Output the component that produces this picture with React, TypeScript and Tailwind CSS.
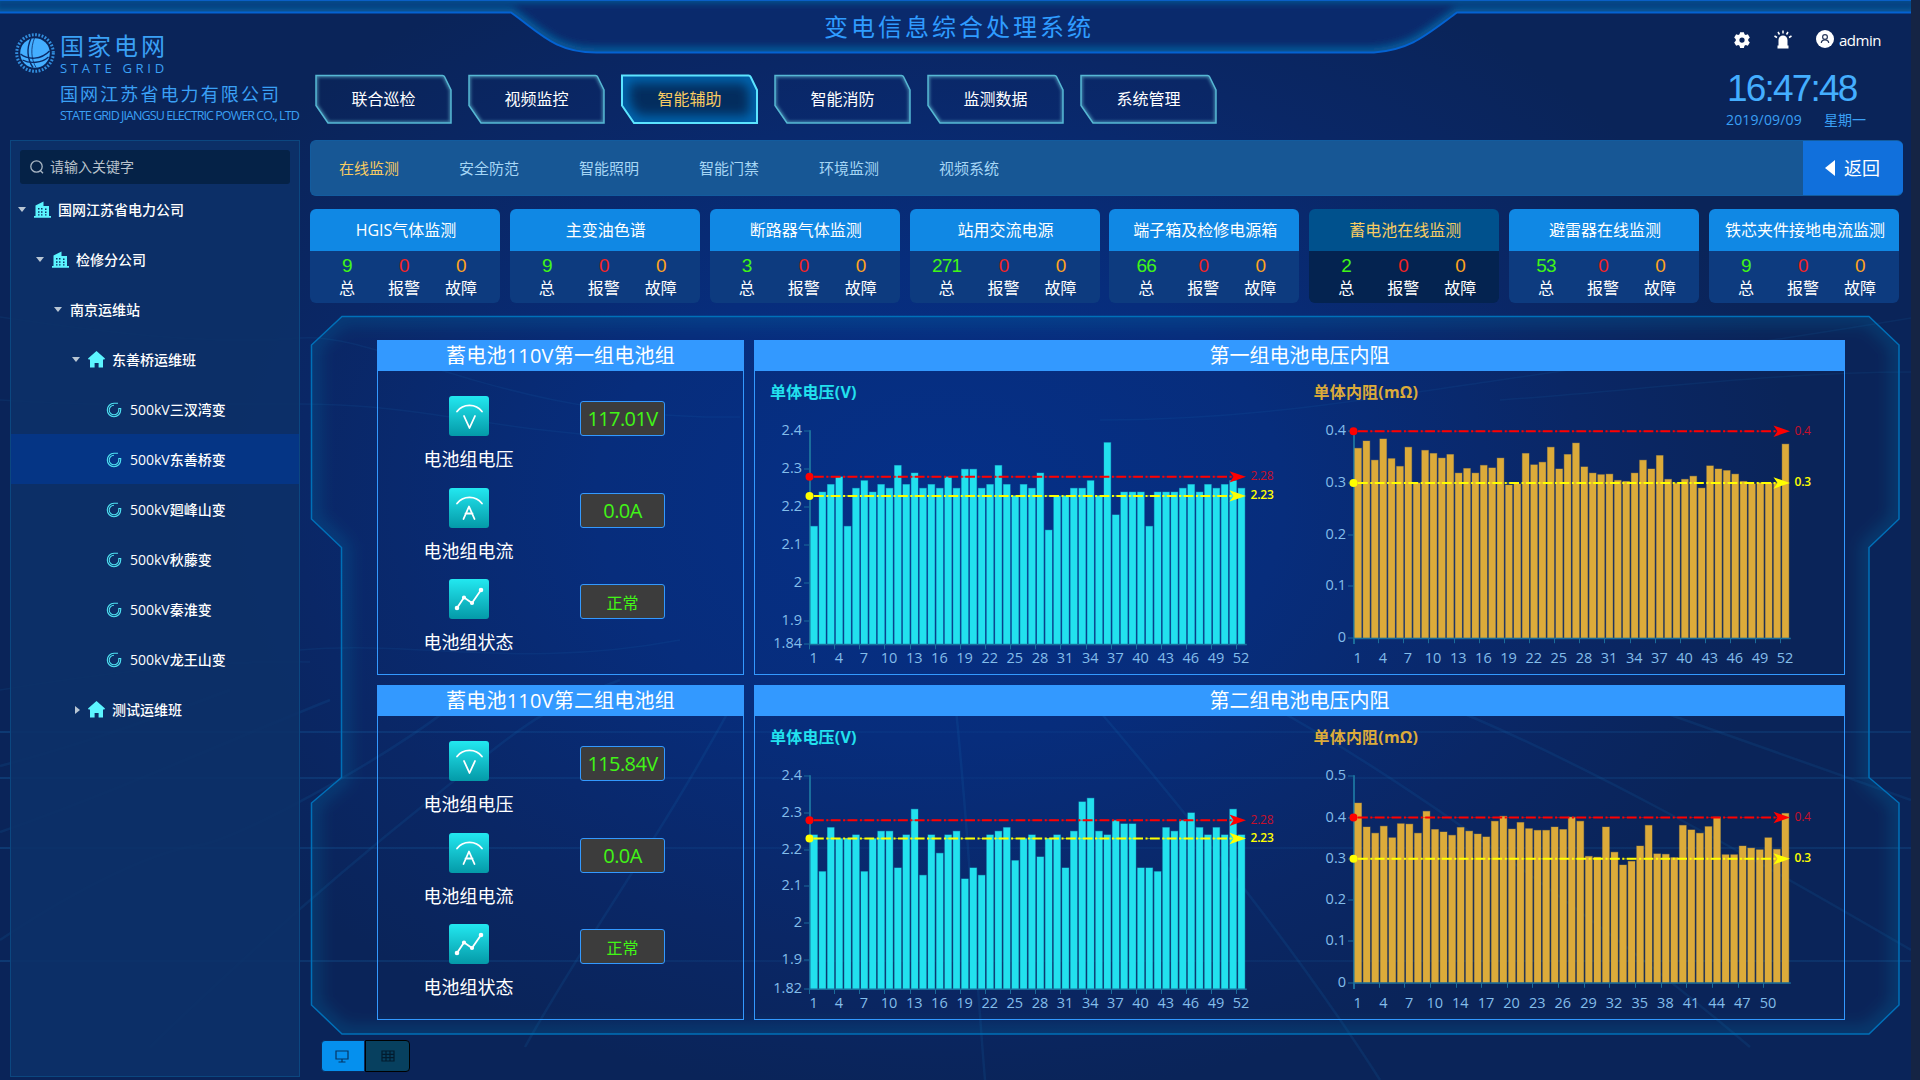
import React from "react";

const NAV = ["联合巡检", "视频监控", "智能辅助", "智能消防", "监测数据", "系统管理"];
const SUBNAV = ["在线监测", "安全防范", "智能照明", "智能门禁", "环境监测", "视频系统"];

const CARDS = [
  { title: "HGIS气体监测", total: 9 },
  { title: "主变油色谱", total: 9 },
  { title: "断路器气体监测", total: 3 },
  { title: "站用交流电源", total: 271 },
  { title: "端子箱及检修电源箱", total: 66 },
  { title: "蓄电池在线监测", total: 2, active: true },
  { title: "避雷器在线监测", total: 53 },
  { title: "铁芯夹件接地电流监测", total: 9 },
];

type TreeIcon = "building" | "home" | "ring" | "none";
const TREE: { level: number; label: string; icon: TreeIcon; arrow?: "open" | "closed"; active?: boolean }[] = [
  { level: 0, label: "国网江苏省电力公司", icon: "building", arrow: "open" },
  { level: 1, label: "检修分公司", icon: "building", arrow: "open" },
  { level: 2, label: "南京运维站", icon: "none", arrow: "open" },
  { level: 3, label: "东善桥运维班", icon: "home", arrow: "open" },
  { level: 4, label: "500kV三汊湾变", icon: "ring" },
  { level: 4, label: "500kV东善桥变", icon: "ring", active: true },
  { level: 4, label: "500kV廻峰山变", icon: "ring" },
  { level: 4, label: "500kV秋藤变", icon: "ring" },
  { level: 4, label: "500kV秦淮变", icon: "ring" },
  { level: 4, label: "500kV龙王山变", icon: "ring" },
  { level: 3, label: "测试运维班", icon: "home", arrow: "closed" },
];

const V1 = [
  2.15, 2.24, 2.26, 2.28, 2.15, 2.25, 2.27, 2.24, 2.26, 2.25, 2.31, 2.26, 2.29, 2.25, 2.26, 2.25, 2.28, 2.25, 2.3, 2.3,
  2.25, 2.26, 2.31, 2.26, 2.23, 2.26, 2.25, 2.29, 2.14, 2.23, 2.23, 2.25, 2.25, 2.27, 2.23, 2.37, 2.18, 2.24, 2.24, 2.24,
  2.15, 2.24, 2.24, 2.24, 2.25, 2.26, 2.24, 2.26, 2.25, 2.26, 2.27, 2.25,
];
const R1 = [
  0.367, 0.381, 0.344, 0.385, 0.347, 0.332, 0.369, 0.3, 0.363, 0.357, 0.348, 0.355, 0.319, 0.328, 0.319, 0.334, 0.329,
  0.348, 0.296, 0.298, 0.357, 0.335, 0.34, 0.369, 0.327, 0.355, 0.377, 0.331, 0.319, 0.316, 0.317, 0.305, 0.303, 0.319,
  0.344, 0.327, 0.353, 0.307, 0.299, 0.307, 0.313, 0.29, 0.333, 0.327, 0.324, 0.317, 0.303, 0.298, 0.3, 0.3, 0.299, 0.375,
];
const V2 = [
  2.24, 2.14, 2.26, 2.23, 2.23, 2.24, 2.14, 2.23, 2.25, 2.25, 2.15, 2.24, 2.31, 2.13, 2.24, 2.19, 2.24, 2.25, 2.12, 2.15,
  2.13, 2.24, 2.25, 2.26, 2.17, 2.23, 2.24, 2.18, 2.23, 2.24, 2.15, 2.25, 2.33, 2.34, 2.25, 2.24, 2.28, 2.27, 2.27, 2.15,
  2.15, 2.14, 2.26, 2.25, 2.28, 2.3, 2.26, 2.24, 2.26, 2.24, 2.31, 2.24,
];
const R2 = [
  0.435, 0.377, 0.362, 0.379, 0.351, 0.385, 0.384, 0.362, 0.415, 0.371, 0.365, 0.357, 0.376, 0.367, 0.36, 0.353, 0.391,
  0.403, 0.372, 0.388, 0.373, 0.369, 0.369, 0.377, 0.371, 0.401, 0.391, 0.306, 0.304, 0.377, 0.316, 0.285, 0.294, 0.331,
  0.381, 0.312, 0.311, 0.303, 0.381, 0.37, 0.362, 0.378, 0.401, 0.31, 0.31, 0.331, 0.326, 0.322, 0.351, 0.323, 0.41,
];

const cells = Array.from({ length: 52 }, (_, i) => i + 1);
const cellsWithout13 = cells.filter((n) => n !== 13);

interface ChartProps {
  title: string;
  color: string;
  width: number;
  x0: number;
  titleX: number;
  baseY: number;
  axisBottom: number;
  min: number;
  max: number;
  ticks: number[];
  values: number[];
  names: number[];
  red: number;
  yellow: number;
}

function BarChart(p: ChartProps) {
  const top = 60.2;
  const plotW = 435.8;
  const step = plotW / p.values.length;
  const y = (v: number) => p.baseY - ((v - p.min) / (p.max - p.min)) * (p.baseY - top);
  const axis = "#1a6d9b";
  const marks = [
    { v: p.red, c: "#ff0000", t: "#c80f2a" },
    { v: p.yellow, c: "#ffff00", t: "#ffff00" },
  ];
  return (
    <svg width={p.width} height={303} className="block shrink-0">
      <text x={p.titleX} y={27} fontSize={16} fontWeight={700} fill={p.color} letterSpacing={0.2}>
        {p.title}
      </text>
      <rect x={p.x0 - 1} y={top - 1} width={2} height={p.axisBottom - top + 1} fill={axis} />
      {p.ticks.map((t) => (
        <g key={t}>
          <rect x={p.x0 - 6} y={Math.round(y(t)) - 0.5} width={6} height={1} fill={axis} />
          <text x={p.x0 - 8} y={y(t) + 4} fontSize={14.5} fill="#83bdea" textAnchor="end">
            {t}
          </text>
        </g>
      ))}
      {p.values.map((v, i) => (
        <rect
          key={i}
          x={p.x0 + i * step + 0.7}
          y={y(v)}
          width={step * 0.8}
          height={p.baseY - y(v)}
          fill={p.color}
          stroke={p.color}
          strokeOpacity={0.35}
          strokeWidth={1}
        />
      ))}
      <rect x={p.x0 - 1} y={p.baseY - 0.5} width={plotW + 2} height={1.5} fill={axis} />
      {p.names.map((n, i) =>
        i % 3 === 0 ? (
          <g key={n}>
            <rect x={Math.round(p.x0 + i * step) - 1} y={p.baseY} width={1} height={5} fill={axis} />
            <text x={p.x0 + (i + 0.5) * step - 0.5} y={292} fontSize={14.5} fill="#83bdea" textAnchor="middle">
              {n}
            </text>
          </g>
        ) : null
      )}
      {marks.map((m) => (
        <g key={m.c} transform={`translate(${p.x0} ${y(m.v)})`}>
          <line x1={0} x2={426} y1={0} y2={0} stroke={m.c} strokeWidth={1} strokeOpacity={0.45} strokeDasharray="10.800 6" />
          <line x1={4} x2={426} y1={0} y2={0} stroke={m.c} strokeWidth={2} strokeDasharray="9.800 2.500 2 2.500" />
          <circle cx={-0.5} cy={0} r={4} fill={m.c} />
          <path d="M436 0 L419.5 -5.7 L423.5 0 L419.5 5.7 Z" fill={m.c} />
          <text x={440.500} y={3.5} fontSize={12} fill={m.t} fontWeight={m.c === "#ffff00" ? 600 : 400} letterSpacing={-0.2}>
            {m.v}
          </text>
        </g>
      ))}
    </svg>
  );
}

function MeterIcon({ kind }: { kind: "V" | "A" | "line" }) {
  return (
    <div className="flex h-10 w-10 items-center justify-center rounded-[3px] bg-linear-to-b from-[#22e8f0] to-[#049aa8]">
      <svg width="40" height="40" viewBox="0 0 40 40" fill="none" stroke="#fff" strokeWidth="1.8" strokeLinecap="round" strokeLinejoin="round">
        {kind !== "line" && <path d="M8 15.5C14 7.300 27 7.300 33 15.500" />}
        {kind === "V" && <path d="M15 20L20.500 32L26 20" />}
        {kind === "A" && <path d="M14.500 31L20 18.500L25.500 31M16.500 25.500H23.500" />}
        {kind === "line" && (
          <>
            <path d="M8 29L15 18.500L23 24L32 11" />
            <circle cx="8" cy="29" r="1.400" fill="#fff" />
            <circle cx="15" cy="18.500" r="1.200" fill="#fff" />
            <circle cx="23" cy="24" r="1.200" fill="#fff" />
            <circle cx="32" cy="11" r="1.400" fill="#fff" />
          </>
        )}
      </svg>
    </div>
  );
}

function GroupPanel({ title, voltage }: { title: string; voltage: string }) {
  const rows = [
    { kind: "V" as const, label: "电池组电压", value: voltage, cls: "text-[20px] tracking-[-0.600px] pt-px" },
    { kind: "A" as const, label: "电池组电流", value: "0.0A", cls: "text-[20px] tracking-[-0.600px] pt-px" },
    { kind: "line" as const, label: "电池组状态", value: "正常", cls: "text-base pt-[3px]" },
  ];
  return (
    <section className="h-[335px] w-[367px] shrink-0 border border-[#3399ff]">
      <h2 className="flex h-[30px] items-center justify-center bg-[#3399ff] text-xl leading-none tracking-[0.200px] text-white">{title}</h2>
      <div className="flex flex-col gap-[5px] pt-[25px]">
        {rows.map((r) => (
          <div key={r.label} className="flex h-[86.5px] pl-[31px]">
            <div className="flex w-[120px] flex-col items-center">
              <MeterIcon kind={r.kind} />
              <span className="mt-[13px] -ml-px text-lg leading-5 text-white">{r.label}</span>
            </div>
            <div
              className={`ml-[51px] mt-[5px] flex h-[35px] w-[85px] items-center justify-center rounded-[3px] border border-[#3399ff] bg-[#3c3c3c] leading-none text-[#41f516] ${r.cls}`}
            >
              {r.value}
            </div>
          </div>
        ))}
      </div>
    </section>
  );
}

function ChartPanel({ title, children }: { title: string; children: React.ReactNode }) {
  return (
    <section className="h-[335px] w-[1091px] shrink-0 border border-[#3399ff]">
      <h2 className="flex h-[30px] items-center justify-center bg-[#3399ff] text-xl leading-none text-white">{title}</h2>
      <div className="flex">{children}</div>
    </section>
  );
}

function Background() {
  const h = [731, 777, 847, 960];
  return (
    <svg width="1911" height="1080" className="absolute left-0 top-0" fill="none">
      <defs>
        <radialGradient id="bgGlow" gradientUnits="userSpaceOnUse" cx="0" cy="0" r="1" gradientTransform="translate(940 500) scale(860 600)">
          <stop offset="0" stopColor="#053088" />
          <stop offset="0.4" stopColor="#072d7c" />
          <stop offset="0.75" stopColor="#0a2766" />
          <stop offset="1" stopColor="#0a2459" />
        </radialGradient>
        <linearGradient id="hLine" x1="0" x2="1">
          <stop offset="0" stopColor="#1a7ac0" stopOpacity="0.250" />
          <stop offset="0.500" stopColor="#1a7ac0" stopOpacity="0.060" />
          <stop offset="1" stopColor="#1a7ac0" stopOpacity="0.180" />
        </linearGradient>
      </defs>
      <rect width="1911" height="1080" fill="url(#bgGlow)" />
      {h.map((yy) => (
        <rect key={yy} x="0" y={yy} width="1911" height="2" fill="url(#hLine)" />
      ))}
      <g stroke="#1a7fc4" strokeOpacity="0.130" strokeWidth="2.500">
        <path d="M150 1047C240 960 330 880 430 800S540 710 620 680" />
        <path d="M525 1047C590 930 660 840 740 690" />
        <path d="M985 1080C975 960 968 820 955 700" />
        <path d="M1380 1080C1310 970 1210 840 1090 700" />
        <path d="M1750 1047C1600 920 1380 760 1240 690" />
        <path d="M0 940C90 880 160 850 200 845S420 740 470 690" />
        <path d="M0 832C120 790 230 740 330 700" />
        <path d="M0 766C80 745 150 720 230 690" />
        <path d="M1911 950C1740 850 1560 750 1430 700" />
        <path d="M1911 800C1800 760 1700 725 1600 690" />
      </g>
      <g stroke="#1a7fc4" strokeOpacity="0.100" strokeWidth="1.500">
        <path d="M0 317C120 335 220 345 300 338S500 420 740 417" />
        <path d="M0 400C160 410 240 400 340 405S500 430 620 437" />
        <path d="M300 650C420 640 520 670 680 640" />
        <path d="M1911 318C1780 340 1640 360 1500 380S1250 420 1100 420" />
        <path d="M1911 372C1780 372 1640 390 1500 400" />
        <path d="M0 690C120 670 220 660 310 662" />
      </g>
    </svg>
  );
}

function HeaderFrame() {
  const shape = "M-10 12.500H511C540 33 555 52.500 596 52.500H1374C1410 50 1425 36 1457 12.500H1921V-3H-10Z";
  return (
    <svg width="1911" height="60" className="absolute left-0 top-0">
      <defs>
        <clipPath id="hdClip">
          <path d={shape} />
        </clipPath>
        <filter id="hdBlur" x="-5%" y="-60%" width="110%" height="220%">
          <feGaussianBlur stdDeviation="4" />
        </filter>
      </defs>
      <path d={shape} fill="#0a2a6c" />
      <g clipPath="url(#hdClip)">
        <path d={shape} fill="none" stroke="#0c5c98" strokeWidth="8" filter="url(#hdBlur)" />
        <path d={shape} fill="none" stroke="#0d63a4" strokeWidth="4" filter="url(#hdBlur)" />
      </g>
      <path d={shape} fill="none" stroke="#0462d2" strokeWidth="2" />
      <rect width="1911" height="1" fill="#0a5fc6" />
    </svg>
  );
}

function StateGridLogo() {
  return (
    <svg width="42" height="42" viewBox="0 0 42 42" fill="none">
      <circle cx="21" cy="21" r="18.300" stroke="#3aa0f5" strokeOpacity="0.850" strokeWidth="3" strokeDasharray="1.800 1.500" />
      <circle cx="21" cy="21" r="14.800" fill="#44aeff" />
      <g stroke="#0a2a68" strokeWidth="1.400">
        <path d="M17 6.500C12.500 16 13 27 19 35.500" />
        <path d="M20.500 6C16.500 16 17 27 22 35.500" strokeWidth="0.800" />
        <path d="M6.500 22C14 28 27 28 35.500 19" />
        <path d="M8.500 28C16 32 28 31 34.500 25" />
      </g>
    </svg>
  );
}

function NavButton({ label, active }: { label: string; active: boolean }) {
  const d = "M1.500 1.500H127.500Q129 1.500 129.700 3L136 16V49H13L1 31.500V1.500Z";
  const id = active ? "navOn" : "navOff";
  return (
    <button className="relative flex h-[50px] w-[137px] items-center justify-center">
      <svg width="137" height="50" className="absolute left-0 top-0">
        <defs>
          <clipPath id={id}>
            <path d={d} />
          </clipPath>
          <filter id={id + "Blur"}>
            <feGaussianBlur stdDeviation={active ? 6 : 1.5} />
          </filter>
        </defs>
        {active && <path d={d} fill="#032d5e" />}
        <g clipPath={`url(#${id})`}>
          <path
            d={d}
            fill="none"
            stroke={active ? "#0468b4" : "#5fb4cf"}
            strokeOpacity={active ? 1 : 0.6}
            strokeWidth={active ? 14 : 4}
            filter={`url(#${id}Blur)`}
          />
        </g>
        <path d={d} fill="none" stroke={active ? "#5ce4ff" : "#56b8d4"} strokeWidth={active ? 2 : 1.5} />
      </svg>
      <span className={`relative text-base leading-none ${active ? "text-[#f7cb62]" : "text-white"}`}>{label}</span>
    </button>
  );
}

function TreeGlyph({ icon }: { icon: TreeIcon }) {
  if (icon === "building")
    return (
      <svg width="17" height="17" viewBox="0 0 17 17" className="mr-[7px] shrink-0">
        <path
          fillRule="evenodd"
          fill="#5cf5ff"
          d="M0 15H1.500V4.500L9.500 0.500V5H15V15H17V16.800H0ZM4 7V8.500H5.500V7ZM4 10.300V11.800H5.500V10.300ZM7 7V8.500H8.500V7ZM7 10.300V11.800H8.500V10.300ZM11 7.500V9H12.500V7.500ZM11 10.500V12H12.500V10.500ZM4 13.300V14.500H5.500V13.300ZM7 13.300V14.500H8.500V13.300ZM11 13.300V14.500H12.500V13.300Z"
        />
      </svg>
    );
  if (icon === "home")
    return (
      <svg width="17" height="17" viewBox="0 0 17 17" className="mr-[7px] shrink-0">
        <path fill="#5cf5ff" d="M8.500 0L17 7.500L16.400 8.600H15V16.500H10.600V12H6.600V16.500H2V8.600H0.600L0 7.500Z" />
      </svg>
    );
  if (icon === "ring")
    return (
      <svg width="16" height="16" viewBox="0 0 16 16" className="mr-2 shrink-0" fill="none" stroke="#4fe3f2" strokeWidth="1.100">
        <path d="M12 1.300H8A6.700 6.700 0 1 0 14.700 8V6.500H12.800V8A4.800 4.800 0 1 1 8 3.200" />
      </svg>
    );
  return null;
}

const INDENT = ["pl-[7px]", "pl-[25px]", "pl-[43px]", "pl-[61px]", "pl-[79px]"];

function Sidebar() {
  return (
    <aside className="mt-px h-[937px] w-[290px] shrink-0 border border-[#0c4780] bg-[#0c3168]/90 pt-[9px]">
      <div className="mx-[9px] flex h-[34px] items-center rounded-[3px] bg-[#052247] pl-2.5 text-sm text-[#b9c2cc]">
        <svg width="14" height="14" viewBox="0 0 14 14" fill="none" stroke="#a9b6c4" strokeWidth="1.300" className="mr-1.5">
          <circle cx="6.500" cy="6.500" r="5.700" />
          <path d="M10.300 10.500L13 13.300" />
        </svg>
        请输入关键字
      </div>
      <ul>
        {TREE.map((n) => (
          <li
            key={n.label}
            className={`flex h-[50px] items-center pt-px text-sm font-medium text-white ${INDENT[n.level]} ${n.active ? "bg-[#053585]" : ""}`}
          >
            <span className={`flex h-3 items-center ${n.icon === "none" ? "w-4" : "w-4"}`}>
              {n.arrow === "open" && <span className="border-x-4 border-t-[5px] border-x-transparent border-t-[#b9c6d4]" />}
              {n.arrow === "closed" && <span className="ml-[3px] border-y-4 border-l-[5px] border-y-transparent border-l-[#b9c6d4]" />}
            </span>
            <TreeGlyph icon={n.icon} />
            <span className="leading-none">{n.label}</span>
          </li>
        ))}
      </ul>
    </aside>
  );
}

function StatusCard({ title, total, active }: { title: string; total: number; active?: boolean }) {
  const cols = [
    { v: total, label: "总", c: "text-[#41f516]" },
    { v: 0, label: "报警", c: "text-[#f52323]" },
    { v: 0, label: "故障", c: "text-[#ffa31e]" },
  ];
  return (
    <div className="w-[190px] shrink-0 overflow-hidden rounded-md">
      <div
        className={`flex h-[42px] items-center justify-center whitespace-nowrap pl-0.5 text-base leading-none ${active ? "bg-[#00518d] text-[#f7cb62]" : "bg-[#1088e4] text-white"}`}
      >
        {title}
      </div>
      <div className={`flex h-[52px] justify-center pr-0.5 pt-[5px] ${active ? "bg-[#042350]" : "bg-[#0d3b7f]"}`}>
        {cols.map((c) => (
          <div key={c.label} className="flex w-[57px] flex-col items-center">
            <span className={`h-[18px] font-['Liberation_Sans',sans-serif] text-[19px] leading-[19px] tracking-[-0.800px] ${c.c}`}>{c.v}</span>
            <span className="mt-1 text-base leading-5 text-white">{c.label}</span>
          </div>
        ))}
      </div>
    </div>
  );
}

function ContentFrame() {
  const d =
    "M342 316.500H1869L1899 345V519L1869 547.500V777.500L1899 803V1005L1869 1034H342L311.500 1005V803L341.500 777.500V547.500L311.500 519V345Z";
  return (
    <svg width="1593" height="722" viewBox="310 315 1593 722" className="absolute left-0 top-0">
      <defs>
        <clipPath id="frClip">
          <path d={d} />
        </clipPath>
        <filter id="frBlur" x="-5%" y="-5%" width="110%" height="110%">
          <feGaussianBlur stdDeviation="8" />
        </filter>
      </defs>
      <g clipPath="url(#frClip)">
        <path d={d} fill="none" stroke="#0b7ab0" strokeOpacity="0.280" strokeWidth="16" filter="url(#frBlur)" />
      </g>
      <path d={d} fill="none" stroke="#0070b8" strokeWidth="1.500" />
    </svg>
  );
}

export default function App() {
  const cyan = "#22e1ee";
  const gold = "#dcab3a";
  return (
    <div className="relative h-[1080px] w-[1920px] overflow-hidden bg-[#152444] font-['Open_Sans','Noto_Sans_CJK_SC',sans-serif]">
      <Background />
      <div className="relative w-[1911px]">
        <header className="relative flex h-[139px]">
          <HeaderFrame />
          <div className="relative flex w-[315px] shrink-0 pl-3.5 pt-8">
            <StateGridLogo />
            <div className="ml-1 w-[250px] whitespace-nowrap text-[#3aa0f5]">
              <div className="text-2xl leading-7 tracking-[3px]">国家电网</div>
              <div className="text-[13px] leading-4 tracking-[3.700px]">STATE GRID</div>
              <div className="mt-[7px] text-lg leading-[22px] tracking-[2.100px]">国网江苏省电力有限公司</div>
              <div className="mt-[3px] text-[12.500px] leading-4 tracking-[-0.930px]">STATE GRID JIANGSU ELECTRIC POWER CO., LTD</div>
            </div>
          </div>
          <div className="relative flex w-[1350px] shrink-0 flex-col">
            <h1 className="h-[74px] pl-[509px] pt-[11px] text-2xl leading-8 tracking-[3px] text-[#2f9cff]">变电信息综合处理系统</h1>
            <nav className="flex gap-4">
              {NAV.map((n, i) => (
                <NavButton key={n} label={n} active={i === 2} />
              ))}
            </nav>
          </div>
          <div className="relative pl-[61px] pt-[30px]">
            <div className="flex h-5 items-center text-white">
              <svg width="18" height="18" viewBox="0 0 24 24" fill="#fff" className="ml-[7px]">
                <path
                  fillRule="evenodd"
                  d="M9.500 1.500H14.500L15.300 4.200L17 5.200L19.800 4.400L22.400 8.800L20.300 11V13L22.400 15.200L19.800 19.600L17 18.800L15.300 19.800L14.500 22.500H9.500L8.700 19.800L7 18.800L4.200 19.600L1.600 15.200L3.700 13V11L1.600 8.800L4.200 4.400L7 5.200L8.700 4.200ZM12 8.500A3.500 3.500 0 1 0 12 15.500A3.500 3.500 0 1 0 12 8.500Z"
                />
              </svg>
              <svg width="18" height="19" viewBox="0 0 18 19" fill="#fff" className="-mt-0.5 ml-[23px]">
                <path d="M4.500 15.500V10A4.500 4.500 0 0 1 13.500 10V15.500H14.500V18.500H3.500V15.500Z" />
                <path d="M9 0.500V3.500M4 2L5.500 4.500M14 2L12.500 4.500M0.500 6L3 7.500M17.500 6L15 7.500" stroke="#fff" strokeWidth="1.500" />
              </svg>
              <svg width="18" height="18" viewBox="0 0 18 18" className="-mt-0.5 ml-6" fill="none" stroke="#2a3a5c" strokeWidth="1.200">
                <circle cx="9" cy="9" r="9" fill="#fff" stroke="none" />
                <circle cx="9" cy="7" r="2.400" />
                <path d="M5.300 13C5.500 8.800 12.500 8.800 12.700 13" />
              </svg>
              <span className="ml-[5px] text-[15px] leading-none tracking-[-0.500px]">admin</span>
            </div>
            <div className="mt-5 h-[38px] pl-px font-['Liberation_Sans',sans-serif] text-[37px] leading-[38px] tracking-[-1.800px] text-[#44aeff]">16:47:48</div>
            <div className="flex text-sm leading-6 text-[#3aa0f5]">
              <span className="w-[98px] tracking-[0.150px]">2019/09/09</span>
              <span>星期一</span>
            </div>
          </div>
        </header>

        <div className="flex pl-2.5">
          <Sidebar />
          <main className="ml-2.5 w-[1593px] pt-px">
            <div className="flex h-14 items-stretch overflow-hidden rounded-md border-y border-l border-[#135c9e] bg-[#175795]">
              <div className="flex flex-1 items-center pl-7">
                {SUBNAV.map((s, i) => (
                  <span key={s} className={`w-[120px] text-[15px] leading-none ${i === 0 ? "text-[#f7cb62]" : "text-[#a5d6f5]"}`}>
                    {s}
                  </span>
                ))}
              </div>
              <button className="-my-px flex w-[100px] items-center justify-center bg-[#1170dc] pr-px text-lg leading-none text-white">
                <span className="mr-[9px] border-y-8 border-r-[10px] border-y-transparent border-r-white" />
                返回
              </button>
            </div>

            <div className="mt-[13px] flex w-[1589px] justify-between">
              {CARDS.map((c) => (
                <StatusCard key={c.title} {...c} />
              ))}
            </div>

            <div className="relative mt-3 h-[722px] pl-[67px] pt-[25px]">
              <ContentFrame />
              <div className="relative flex flex-col gap-2.5">
                <div className="flex gap-2.5">
                  <GroupPanel title="蓄电池110V第一组电池组" voltage="117.01V" />
                  <ChartPanel title="第一组电池电压内阻">
                    <BarChart title="单体电压(V)" color={cyan} width={545} x0={55} titleX={15} baseY={273.3} axisBottom={274}
                      min={1.84} max={2.4} ticks={[2.4, 2.3, 2.2, 2.1, 2, 1.9, 1.84]} values={V1} names={cells} red={2.28} yellow={2.23} />
                    <BarChart title="单体内阻(mΩ)" color={gold} width={544} x0={54} titleX={13.5} baseY={267.2} axisBottom={273}
                      min={0} max={0.4} ticks={[0.4, 0.3, 0.2, 0.1, 0]} values={R1} names={cells} red={0.4} yellow={0.3} />
                  </ChartPanel>
                </div>
                <div className="flex gap-2.5">
                  <GroupPanel title="蓄电池110V第二组电池组" voltage="115.84V" />
                  <ChartPanel title="第二组电池电压内阻">
                    <BarChart title="单体电压(V)" color={cyan} width={545} x0={55} titleX={15} baseY={273} axisBottom={274}
                      min={1.82} max={2.4} ticks={[2.4, 2.3, 2.2, 2.1, 2, 1.9, 1.82]} values={V2} names={cells} red={2.28} yellow={2.23} />
                    <BarChart title="单体内阻(mΩ)" color={gold} width={544} x0={54} titleX={13.5} baseY={266.8} axisBottom={273}
                      min={0} max={0.5} ticks={[0.5, 0.4, 0.3, 0.2, 0.1, 0]} values={R2} names={cellsWithout13} red={0.4} yellow={0.3} />
                  </ChartPanel>
                </div>
              </div>
            </div>

            <div className="mt-[3px] flex pl-[11px]">
              <button className="flex h-8 w-11 items-center justify-center rounded-l border border-[#0a2a5c] bg-[#0590ee] pr-0.5">
                <svg width="14" height="13" viewBox="0 0 14 13" fill="none" stroke="#053563" strokeWidth="1.200">
                  <path d="M1 1H13V9H1ZM7 9V12M3.500 12H10.500" />
                </svg>
              </button>
              <button className="flex h-8 w-[45px] items-center justify-center rounded-r border border-black bg-[#07405f]">
                <svg width="14" height="12" viewBox="0 0 14 12" fill="none" stroke="#021b2e" strokeWidth="1.200">
                  <path d="M1 1H13V11H1ZM1 4.300H13M1 7.700H13M5 1V11M9 1V11" />
                </svg>
              </button>
            </div>
          </main>
        </div>
      </div>
    </div>
  );
}
